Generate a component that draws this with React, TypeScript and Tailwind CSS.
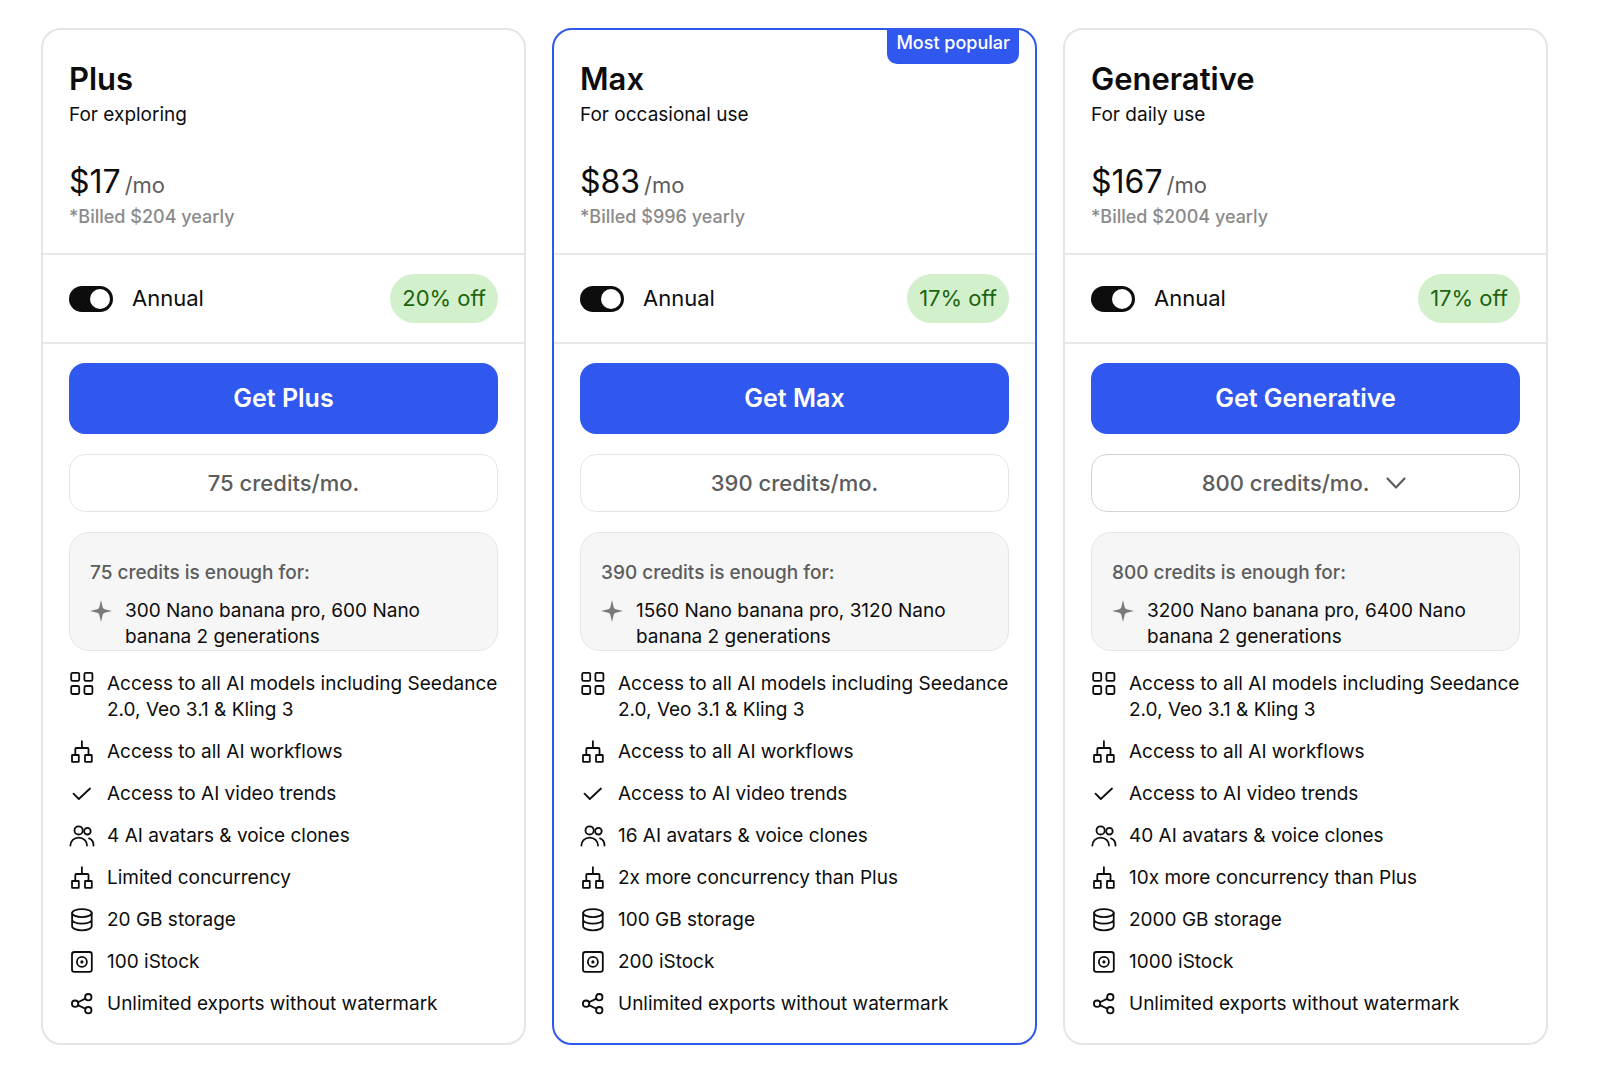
import React, { useState } from 'react';

interface Plan {
  name: string;
  tagline: string;
  price: number;
  yearly: number;
  discount: number;
  credits: number;
  creditOptions?: number[];
  generations: string;
  avatars: number;
  concurrency: string;
  storage: number;
  istock: number;
  popular?: boolean;
}

const PLANS: Plan[] = [
  {
    name: 'Plus',
    tagline: 'For exploring',
    price: 17,
    yearly: 204,
    discount: 20,
    credits: 75,
    generations: '300 Nano banana pro, 600 Nano banana 2 generations',
    avatars: 4,
    concurrency: 'Limited concurrency',
    storage: 20,
    istock: 100,
  },
  {
    name: 'Max',
    tagline: 'For occasional use',
    price: 83,
    yearly: 996,
    discount: 17,
    credits: 390,
    generations: '1560 Nano banana pro, 3120 Nano banana 2 generations',
    avatars: 16,
    concurrency: '2x more concurrency than Plus',
    storage: 100,
    istock: 200,
    popular: true,
  },
  {
    name: 'Generative',
    tagline: 'For daily use',
    price: 167,
    yearly: 2004,
    discount: 17,
    credits: 800,
    creditOptions: [800],
    generations: '3200 Nano banana pro, 6400 Nano banana 2 generations',
    avatars: 40,
    concurrency: '10x more concurrency than Plus',
    storage: 2000,
    istock: 1000,
  },
];

const Icon: React.FC<{ children: React.ReactNode }> = ({ children }) => (
  <svg
    viewBox="0 1 26 26"
    className="w-[26px] h-[26px] shrink-0"
    fill="none"
    stroke="currentColor"
    strokeWidth={1.8}
    strokeLinecap="round"
    strokeLinejoin="round"
    aria-hidden="true"
  >
    {children}
  </svg>
);

const GridIcon = () => (
  <Icon>
    <rect x="2.2" y="2.8" width="8" height="8" rx="1.4" />
    <rect x="15.4" y="2.8" width="8" height="8" rx="1.4" />
    <rect x="2.2" y="16" width="8" height="8" rx="1.4" />
    <rect x="15.4" y="16" width="8" height="8" rx="1.4" />
  </Icon>
);

const WorkflowIcon = () => (
  <Icon>
    <path d="M12.9 3.2v6.8M6.3 17v-6a1 1 0 0 1 1-1h11.2a1 1 0 0 1 1 1V17" />
    <rect x="3" y="17" width="6.8" height="6.8" rx="0.4" />
    <rect x="16" y="17" width="6.8" height="6.8" rx="0.4" />
  </Icon>
);

const CheckIcon = () => (
  <Icon>
    <path d="M4.5 13.7l5.3 5.3L21 8.5" />
  </Icon>
);

const UsersIcon = () => (
  <Icon>
    <circle cx="9.6" cy="8.4" r="4.1" />
    <circle cx="18.4" cy="9.2" r="3.3" />
    <path d="M1.4 23.6c0-4.6 3.6-8 8.3-8s8.3 3.4 8.3 8M20 16.3c2.8.9 4.5 3.8 4.5 7.3" />
  </Icon>
);

const StorageIcon = () => (
  <Icon>
    <ellipse cx="12.9" cy="7.1" rx="9.8" ry="4" />
    <path d="M3.1 7.1v13.2c0 2.2 4.4 4 9.8 4s9.8-1.8 9.8-4V7.1M3.1 13.7c0 2.2 4.4 4 9.8 4s9.8-1.8 9.8-4" />
  </Icon>
);

const StockIcon = () => (
  <Icon>
    <rect x="3" y="4" width="19.8" height="19.8" rx="2.4" />
    <circle cx="12.9" cy="13.9" r="5" />
    <circle cx="12.9" cy="13.9" r="1.6" fill="currentColor" stroke="none" />
  </Icon>
);

const ShareIcon = () => (
  <Icon>
    <circle cx="6.1" cy="13.7" r="3.2" />
    <circle cx="19.3" cy="7.2" r="3.2" />
    <circle cx="19.3" cy="20.2" r="3.2" />
    <path d="M9 12.3l7.4-3.7M9 15.1l7.4 3.7" />
  </Icon>
);

const Feature: React.FC<{ icon: React.ReactNode; children: React.ReactNode }> = ({ icon, children }) => (
  <li className="flex items-start gap-3">
    {icon}
    <span>{children}</span>
  </li>
);

const PlanCard: React.FC<{ plan: Plan }> = ({ plan }) => {
  const [annual, setAnnual] = useState(true);
  const [credits, setCredits] = useState(plan.credits);

  return (
    <section
      className={`relative flex-1 min-w-0 border-2 rounded-[20px] ${
        plan.popular ? 'border-[#3058ee]' : 'border-[#e5e5e5]'
      }`}
    >
      {plan.popular && (
        <span className="absolute top-0 right-4 bg-[#3058ee] text-white text-[18px] leading-[26px] font-medium px-[9px] pb-2 rounded-b-[10px]">
          Most popular
        </span>
      )}

      <header className="px-[26px] pt-7 pb-[23px] border-b-2 border-[#e8e8e8]">
        <h2 className="text-[31px] leading-[42px] font-semibold">{plan.name}</h2>
        <p className="mt-0.5 text-[19px] leading-[26px]">{plan.tagline}</p>
        <p className="mt-9 flex items-baseline gap-1 text-[32px] leading-9">
          ${plan.price}
          <span className="text-[22px] text-[#5c5c5c]">/mo</span>
        </p>
        <p className="mt-px text-[18px] leading-[26px] font-medium text-[#8a8a8a]">*Billed ${plan.yearly} yearly</p>
      </header>

      <div className="flex items-center justify-between px-[26px] py-[19px] border-b-2 border-[#e8e8e8]">
        <label className="flex items-center gap-[19px] text-[22px]">
          <input
            type="checkbox"
            role="switch"
            checked={annual}
            onChange={(e) => setAnnual(e.target.checked)}
            className="appearance-none flex items-center w-11 h-[26px] p-[3px] rounded-full bg-[#a3a3a3] checked:bg-[#0d0d0d] checked:justify-end before:block before:size-5 before:rounded-full before:bg-white"
          />
          Annual
        </label>
        <span className="px-3 rounded-full bg-[#d2f0cb] text-[#1c6410] text-[22px] leading-[49px]">
          {plan.discount}% off
        </span>
      </div>

      <div className="px-[26px] pt-[19px] pb-[26px]">
        <button
          type="button"
          className="w-full h-[71px] rounded-2xl bg-[#3058ee] text-white text-[25px] font-semibold"
        >
          Get {plan.name}
        </button>

        {plan.creditOptions ? (
          <label className="mt-5 flex items-center justify-center gap-[14px] h-[58px] border border-[#d4d4d4] rounded-2xl text-[22px] font-medium text-[#5c5c5c]">
            <select
              aria-label="Credits per month"
              value={credits}
              onChange={(e) => setCredits(Number(e.target.value))}
              className="appearance-none [field-sizing:content] bg-transparent"
            >
              {plan.creditOptions.map((option) => (
                <option key={option} value={option}>
                  {option} credits/mo.
                </option>
              ))}
            </select>
            <svg
              viewBox="0 0 26 26"
              className="size-[26px]"
              fill="none"
              stroke="currentColor"
              strokeWidth={2.2}
              strokeLinecap="round"
              strokeLinejoin="round"
              aria-hidden="true"
            >
              <path d="M4.5 8.5l8.5 9 8.5-9" />
            </svg>
          </label>
        ) : (
          <div className="mt-5 flex items-center justify-center h-[58px] border border-[#e5e5e5] rounded-2xl text-[22px] font-medium text-[#5c5c5c]">
            {credits} credits/mo.
          </div>
        )}

        <div className="mt-5 px-5 pt-[27px] border border-[#e5e5e5] rounded-[20px] bg-[#f6f6f6] text-[19px] leading-[26px]">
          <p className="font-medium text-[#5c5c5c]">{credits} credits is enough for:</p>
          <div className="mt-3 flex items-start gap-[13px]">
            <svg
              viewBox="0 0 22 22"
              className="w-[22px] h-[26px] shrink-0 text-[#7a7a7a]"
              fill="currentColor"
              aria-hidden="true"
            >
              <path d="M11 0L12.7 7.300Q13.100 8.900 14.700 9.300L22 11L14.700 12.700Q13.100 13.100 12.700 14.700L11 22L9.300 14.700Q8.900 13.100 7.300 12.700L0 11L7.300 9.300Q8.900 8.900 9.300 7.300Z" />
            </svg>
            <p>{plan.generations}</p>
          </div>
        </div>

        <ul className="mt-5 flex flex-col gap-4 text-[19px] leading-[26px]">
          <Feature icon={<GridIcon />}>Access to all AI models including Seedance 2.0, Veo 3.1 &amp; Kling 3</Feature>
          <Feature icon={<WorkflowIcon />}>Access to all AI workflows</Feature>
          <Feature icon={<CheckIcon />}>Access to AI video trends</Feature>
          <Feature icon={<UsersIcon />}>{plan.avatars} AI avatars &amp; voice clones</Feature>
          <Feature icon={<WorkflowIcon />}>{plan.concurrency}</Feature>
          <Feature icon={<StorageIcon />}>{plan.storage} GB storage</Feature>
          <Feature icon={<StockIcon />}>{plan.istock} iStock</Feature>
          <Feature icon={<ShareIcon />}>Unlimited exports without watermark</Feature>
        </ul>
      </div>
    </section>
  );
};

export default function App() {
  return (
    <main className="min-h-screen bg-white text-[#0d0d0d] font-['Inter',sans-serif] pt-7 pb-[30px] pl-[41px] pr-[52px]">
      <div className="flex items-stretch gap-[26px]">
        {PLANS.map((plan) => (
          <PlanCard key={plan.name} plan={plan} />
        ))}
      </div>
    </main>
  );
}
